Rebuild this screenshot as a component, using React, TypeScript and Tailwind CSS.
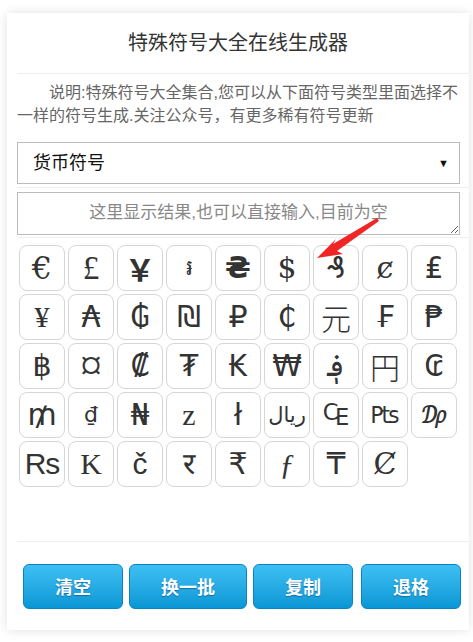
const symbols: { c: string; f: string }[] = [
  { c: "€", f: "font-['DejaVu_Serif',serif] font-light !text-[32px]" },
  { c: "£", f: "font-['Liberation_Serif',serif] !text-[33px]" },
  { c: "￥", f: "font-['Noto_Sans_CJK_SC',sans-serif] font-bold" },
  { c: "៛", f: "font-['DejaVu_Sans',sans-serif] !text-[22px]" },
  { c: "₴", f: "font-['DejaVu_Sans',sans-serif] font-bold" },
  { c: "$", f: "font-['DejaVu_Serif',serif] font-light" },
  { c: "₰", f: "font-['DejaVu_Sans',sans-serif]" },
  { c: "ȼ", f: "font-['DejaVu_Serif',serif] font-light" },
  { c: "₤", f: "font-['DejaVu_Sans',sans-serif]" },

  { c: "¥", f: "font-['Liberation_Serif',serif]" },
  { c: "₳", f: "font-['DejaVu_Sans',sans-serif]" },
  { c: "₲", f: "font-['DejaVu_Sans',sans-serif]" },
  { c: "₪", f: "font-['DejaVu_Sans',sans-serif]" },
  { c: "₽", f: "font-['DejaVu_Sans',sans-serif]" },
  { c: "₵", f: "font-['DejaVu_Sans',sans-serif]" },
  { c: "元", f: "font-['Noto_Sans_CJK_SC',sans-serif] font-light" },
  { c: "₣", f: "font-['DejaVu_Sans',sans-serif]" },
  { c: "₱", f: "font-['DejaVu_Sans',sans-serif]" },

  { c: "฿", f: "font-['DejaVu_Sans',sans-serif]" },
  { c: "¤", f: "font-['Liberation_Serif',serif] !text-[44px]" },
  { c: "₡", f: "font-['DejaVu_Sans',sans-serif]" },
  { c: "₮", f: "font-['DejaVu_Sans',sans-serif]" },
  { c: "₭", f: "font-['DejaVu_Sans',sans-serif]" },
  { c: "₩", f: "font-['DejaVu_Sans',sans-serif]" },
  { c: "؋", f: "font-['DejaVu_Sans',sans-serif]" },
  { c: "円", f: "font-['Noto_Sans_CJK_SC',sans-serif] font-light" },
  { c: "₢", f: "font-['DejaVu_Sans',sans-serif]" },

  { c: "₥", f: "font-['DejaVu_Sans',sans-serif]" },
  { c: "₫", f: "font-['DejaVu_Sans',sans-serif] !text-[22px]" },
  { c: "₦", f: "font-['DejaVu_Sans',sans-serif]" },
  { c: "z", f: "font-['Liberation_Serif',serif]" },
  { c: "ł", f: "font-['DejaVu_Sans',sans-serif]" },
  { c: "ريال", f: "font-['DejaVu_Sans',sans-serif] !text-[21px] tracking-[-1px]" },
  { c: "₠", f: "font-['DejaVu_Sans',sans-serif]" },
  { c: "₧", f: "font-['DejaVu_Sans',sans-serif] !text-[23px]" },
  { c: "₯", f: "font-['DejaVu_Serif',serif] !text-[24px]" },

  { c: "Rs", f: "font-['Liberation_Sans',sans-serif] tracking-[-1px]" },
  { c: "K", f: "font-['Liberation_Serif',serif] font-light" },
  { c: "č", f: "font-['Liberation_Sans',sans-serif]" },
  { c: "र", f: "font-['DejaVu_Sans',sans-serif]" },
  { c: "₹", f: "font-['DejaVu_Sans',sans-serif]" },
  { c: "ƒ", f: "font-['Liberation_Serif',serif] italic" },
  { c: "₸", f: "font-['DejaVu_Sans',sans-serif]" },
  { c: "Ȼ", f: "font-['DejaVu_Serif',serif] font-light" },
];

const actions = ["清空", "换一批", "复制", "退格"];

export default function App() {
  return (
    <div className="min-h-[642px] bg-white pt-[13px] pl-[7px] pr-[4px] font-['Liberation_Sans','Noto_Sans_CJK_SC',sans-serif]">
      <div className="relative h-[617px] bg-white shadow-[0_0_10px_rgba(0,0,0,0.12)]">
        {/* Header */}
        <div className="h-[60px] flex items-center justify-center text-[20px] text-[#333]">
          特殊符号大全在线生成器
        </div>
        <div className="ml-[10px] border-b border-[#eee]" />

        {/* Description */}
        <p className="mt-[7px] pl-[10px] text-[16px] leading-[23px] text-[#666] indent-[2em]">
          说明:特殊符号大全集合,您可以从下面符号类型里面选择不一样的符号生成.关注公众号，有更多稀有符号更新
        </p>

        {/* Type select */}
        <div className="ml-[10px] mt-[15px] pb-[3px] border-b border-[#eee]">
          <div className="mr-[9px] h-[42px] border border-[#bbb] flex items-center justify-between pl-[15px] pr-[10px] text-[18px] text-[#111]">
            <span>货币符号</span>
            <span className="text-[11px] text-[#111]">▼</span>
          </div>
        </div>

        {/* Result */}
        <div className="ml-[10px] mt-[4px] pb-[2px] border-b border-[#eee]">
          <textarea
            className="block mr-[9px] w-[443px] h-[43px] border border-[#bbb] text-center text-[17px] leading-[22px] pt-[9px] placeholder:text-[#888] outline-none resize-y"
            placeholder="这里显示结果,也可以直接输入,目前为空"
          />
        </div>

        {/* Symbols */}
        <div className="ml-[12px] mt-[7px] grid grid-cols-[repeat(9,46px)] gap-[3px] h-[243px] content-start">
          {symbols.map((s, i) => (
            <button
              key={i}
              className={`h-[46px] border border-[#d6d6d6] rounded-[8px] bg-white flex items-center justify-center text-[30px] leading-none text-[#333] whitespace-nowrap ${s.f}`}
            >
              {s.c}
            </button>
          ))}
        </div>

        <div className="ml-[10px] mt-[53px] border-b border-[#eee]" />

        {/* Actions */}
        <div className="ml-[16px] mt-[22px] flex gap-[6px]">
          {actions.map((a, i) => (
            <button
              key={a}
              className={`h-[45px] px-[31px] rounded-[6px] border border-[#0c82c6] bg-gradient-to-b from-[#3cc0f3] to-[#0797d5] text-white text-[18px] font-bold font-['Noto_Sans_CJK_SC',sans-serif] [text-shadow:0_1px_1px_rgba(0,60,110,0.5)] ${i === 3 ? "ml-[2px]" : ""}`}
            >
              {a}
            </button>
          ))}
        </div>

        {/* Annotation arrow */}
        <svg
          className="absolute left-[296px] top-[196px] pointer-events-none"
          width="84"
          height="56"
          viewBox="0 0 84 56"
        >
          <path d="M76 12 L74 9 L30 35 L33 30 L14 49 L40 45 L34 42 Z" fill="#f02626" />
        </svg>
      </div>
    </div>
  );
}
